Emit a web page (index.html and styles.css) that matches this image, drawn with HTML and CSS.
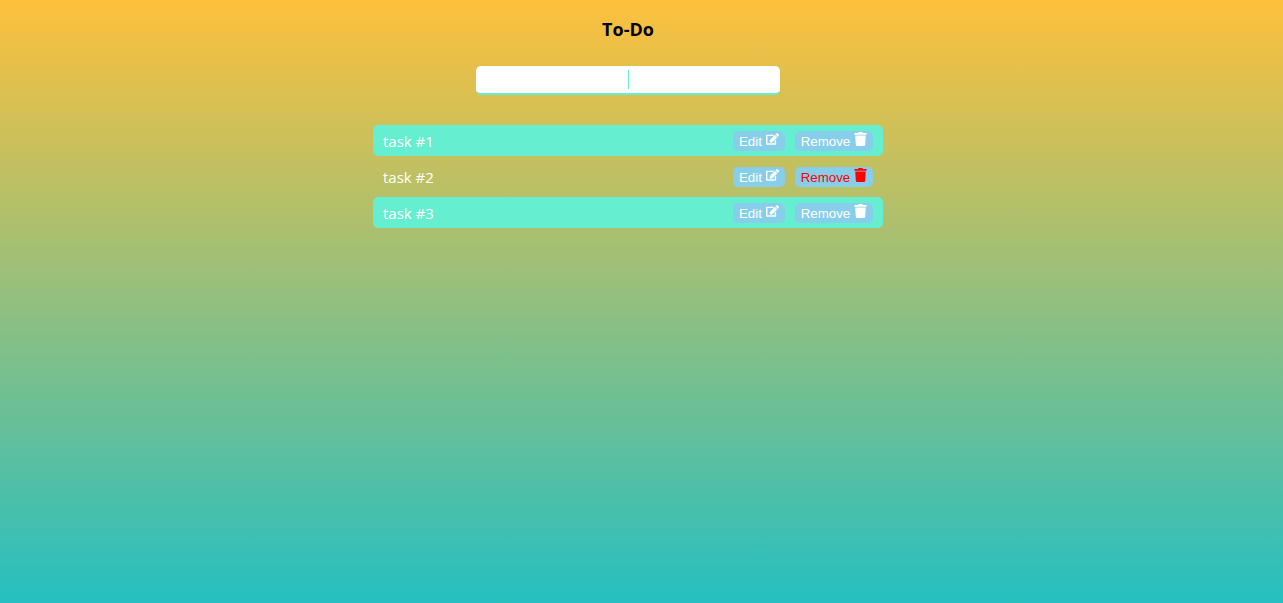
FILE: index.html
```html
<!DOCTYPE html>
<html lang="en">
<head>
<meta charset="utf-8">
<title>To-Do</title>
<link rel="stylesheet" href="styles.css">
</head>
<body>
<svg class="sprite" aria-hidden="true">
  <symbol id="edit" viewBox="0 0 576 512"><path d="M402.600 83.200l90.200 90.200c3.800 3.800 3.800 10 0 13.800L274.400 405.600l-92.800 10.300c-12.400 1.400-22.900-9.100-21.500-21.500l10.300-92.800L388.800 83.200c3.800-3.800 10-3.800 13.800 0zm162-22.900l-48.800-48.800c-15.200-15.200-39.900-15.200-55.200 0l-35.400 35.400c-3.800 3.800-3.800 10 0 13.800l90.200 90.200c3.800 3.800 10 3.800 13.800 0l35.400-35.400c15.200-15.300 15.200-40 0-55.200zM384 346.200V448H64V128h229.800c3.200 0 6.200-1.300 8.500-3.500l40-40c7.600-7.600 2.200-20.500-8.500-20.500H48C21.500 64 0 85.500 0 112v352c0 26.500 21.500 48 48 48h352c26.500 0 48-21.500 48-48V306.200c0-10.700-12.900-16-20.500-8.500l-40 40c-2.200 2.300-3.500 5.300-3.500 8.500z"/></symbol>
  <symbol id="trash" viewBox="0 0 448 512"><path d="M432 32H312l-9.400-18.700A24 24 0 0 0 281.100 0H166.800a23.720 23.720 0 0 0-21.400 13.300L136 32H16A16 16 0 0 0 0 48v32a16 16 0 0 0 16 16h416a16 16 0 0 0 16-16V48a16 16 0 0 0-16-16zM53.200 467a48 48 0 0 0 47.900 45h245.800a48 48 0 0 0 47.900-45L416 128H32z"/></symbol>
</svg>
<main class="todo">
  <h1 class="title">To-Do</h1>
  <input class="entry" type="text" aria-label="New task">
  <ul class="tasks">
    <li class="task">
      <span class="name">task #1</span>
      <button class="action" type="button">Edit <svg class="icon" aria-hidden="true"><use href="#edit"/></svg></button>
      <button class="action" type="button">Remove <svg class="icon" aria-hidden="true"><use href="#trash"/></svg></button>
    </li>
    <li class="task active">
      <span class="name">task #2</span>
      <button class="action" type="button">Edit <svg class="icon" aria-hidden="true"><use href="#edit"/></svg></button>
      <button class="action danger" type="button">Remove <svg class="icon" aria-hidden="true"><use href="#trash"/></svg></button>
    </li>
    <li class="task">
      <span class="name">task #3</span>
      <button class="action" type="button">Edit <svg class="icon" aria-hidden="true"><use href="#edit"/></svg></button>
      <button class="action" type="button">Remove <svg class="icon" aria-hidden="true"><use href="#trash"/></svg></button>
    </li>
  </ul>
</main>
</body>
</html>
```
FILE: styles.css
```css
* {
  box-sizing: border-box;
}

body {
  margin: 0;
  min-height: 100vh;
  background: linear-gradient(0deg, #26bfc1 0%, #fdc03c 100%);
  font-family: "Segoe UI", "Open Sans", sans-serif;
}

.sprite {
  display: none;
}

.todo {
  display: flex;
  flex-direction: column;
  align-items: center;
  padding: 17px 27px 17px 0;
}

.title {
  margin: 0 0 25px;
  font-size: 18px;
  font-weight: 700;
  line-height: 24px;
}

.entry {
  width: 304px;
  max-width: 100%;
  height: 29px;
  padding: 4px 8px;
  border: 0;
  border-bottom: 2px solid #66eed0;
  border-radius: 5px;
  outline: 0;
  /* Caret mark in the middle of the empty field */
  background: linear-gradient(#66eed0, #66eed0) center / 1px 19px no-repeat #fff;
  text-align: center;
}

.tasks {
  display: flex;
  flex-direction: column;
  gap: 5px;
  width: 510px;
  max-width: 100%;
  margin: 30px 0 0;
  padding: 0;
  list-style: none;
}

.task {
  display: flex;
  align-items: flex-end;
  gap: 10px;
  padding: 6px 10px 5px;
  border-radius: 5px;
  background: #66eed0;
  color: #fff;
}

.active {
  background: none;
}

.name {
  flex: 1;
  font-size: 15px;
  line-height: 20px;
}

.action {
  padding: 1px 6px 2px;
  border: 0;
  border-radius: 5px;
  background: skyblue;
  color: #fff;
  font-family: Arial, "Liberation Sans", sans-serif;
  cursor: pointer;
}

.danger {
  color: red;
}

.icon {
  width: 13px;
  height: 14px;
  fill: currentColor;
}
```
